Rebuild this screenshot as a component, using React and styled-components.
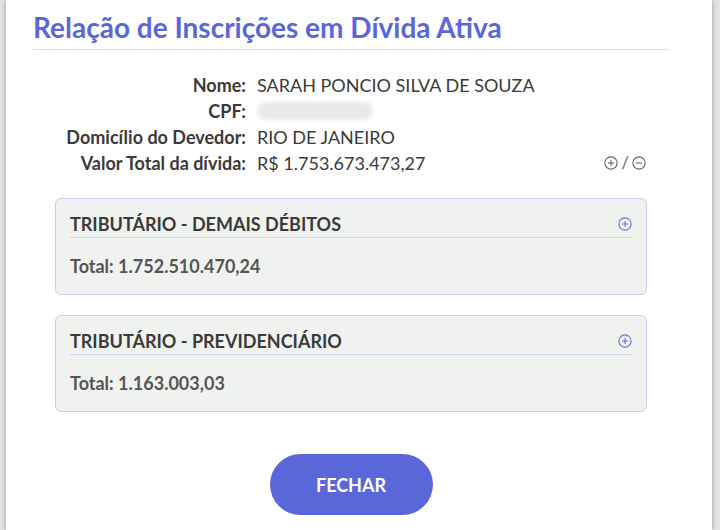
import React from 'react';
import styled, { createGlobalStyle } from 'styled-components';

const GlobalStyle = createGlobalStyle`
  html, body {
    margin: 0;
    padding: 0;
    background: #e4e4e4;
  }
  body {
    font-family: Lato, "Open Sans", sans-serif;
    color: #333;
  }
`;

const Page = styled.div`
  width: 720px;
  height: 530px;
  padding: 0 8px 0 6px;
  box-sizing: border-box;
  overflow: hidden;
`;

const Modal = styled.div`
  height: 100%;
  background: #fff;
  box-shadow: 0 0 5px rgba(0, 0, 0, 0.35);
  padding: 10px 43px 0 27px;
  box-sizing: border-box;
  display: flex;
  flex-direction: column;
`;

const Title = styled.h1`
  margin: 0;
  padding: 0 0 5px;
  font-size: 28px;
  line-height: 34px;
  font-weight: 700;
  color: #5a67d8;
  border-bottom: 1.5px solid #d9dcf5;
`;

const Info = styled.div`
  display: grid;
  grid-template-columns: 213px 1fr auto;
  column-gap: 11px;
  row-gap: 4px;
  margin: 24px 23px 0 0;
  font-size: 18px;
  line-height: 22px;
`;

const Label = styled.div`
  text-align: right;
  font-weight: 700;
  color: #3a3a3a;
`;

const Value = styled.div`
  grid-column: ${p => (p.$wide ? '2 / 4' : 'auto')};
  color: #3a3a3a;
`;

const Blur = styled.div`
  width: 116px;
  height: 18px;
  margin-top: 2px;
  border-radius: 9px;
  background: #e9e9e9;
  filter: blur(2px);
`;

const Toggles = styled.div`
  display: flex;
  align-items: center;
  gap: 3px;
  color: #666;
  font-size: 17px;
`;

const Cards = styled.div`
  display: flex;
  flex-direction: column;
  gap: 20px;
  margin: 24px 22px 0 22px;
`;

const Card = styled.section`
  background: #f0f2ef;
  border: 1.5px solid #c9ccf1;
  border-radius: 6px;
  padding: 14px 14px 17px;
`;

const CardHead = styled.div`
  display: flex;
  align-items: center;
  justify-content: space-between;
  padding-bottom: 2px;
  border-bottom: 1.5px solid #cfd2f1;
`;

const CardTitle = styled.h2`
  margin: 0;
  font-size: 18px;
  line-height: 22px;
  font-weight: 700;
  color: #3a3a3a;
`;

const Total = styled.div`
  margin-top: 17px;
  font-size: 18px;
  line-height: 22px;
  font-weight: 700;
  color: #555;
`;

const Footer = styled.div`
  display: flex;
  justify-content: center;
  margin-top: 42px;
`;

const Button = styled.button`
  width: 163px;
  height: 61px;
  border: none;
  border-radius: 31px;
  background: #5a67d8;
  color: #fff;
  font-family: inherit;
  font-size: 18px;
  font-weight: 700;
  cursor: pointer;
`;

function CircleIcon({ minus, color = '#666', size = 14 }) {
  return (
    <svg width={size} height={size} viewBox="0 0 16 16" fill="none" stroke={color} strokeWidth="1.3">
      <circle cx="8" cy="8" r="7" />
      <line x1="4.5" y1="8" x2="11.5" y2="8" />
      {!minus && <line x1="8" y1="4.5" x2="8" y2="11.5" />}
    </svg>
  );
}

const debts = [
  { title: 'TRIBUTÁRIO - DEMAIS DÉBITOS', total: '1.752.510.470,24' },
  { title: 'TRIBUTÁRIO - PREVIDENCIÁRIO', total: '1.163.003,03' },
];

export default function App() {
  return (
    <Page>
      <GlobalStyle />
      <Modal>
        <Title>Relação de Inscrições em Dívida Ativa</Title>
        <Info>
          <Label>Nome:</Label>
          <Value $wide>SARAH PONCIO SILVA DE SOUZA</Value>
          <Label>CPF:</Label>
          <Value $wide><Blur /></Value>
          <Label>Domicílio do Devedor:</Label>
          <Value $wide>RIO DE JANEIRO</Value>
          <Label>Valor Total da dívida:</Label>
          <Value>R$ 1.753.673.473,27</Value>
          <Toggles>
            <CircleIcon />
            <span>/</span>
            <CircleIcon minus />
          </Toggles>
        </Info>
        <Cards>
          {debts.map(d => (
            <Card key={d.title}>
              <CardHead>
                <CardTitle>{d.title}</CardTitle>
                <CircleIcon color="#6b76dc" />
              </CardHead>
              <Total>Total: {d.total}</Total>
            </Card>
          ))}
        </Cards>
        <Footer>
          <Button>FECHAR</Button>
        </Footer>
      </Modal>
    </Page>
  );
}
